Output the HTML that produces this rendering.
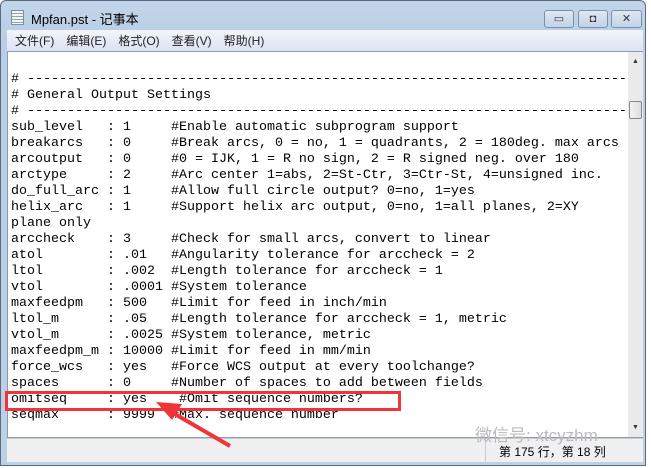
<!DOCTYPE html>
<html><head><meta charset="utf-8"><style>
*{margin:0;padding:0;box-sizing:border-box}
body{width:651px;height:468px;background:#fff;position:relative;overflow:hidden;font-family:"Liberation Sans","Noto Sans CJK SC",sans-serif}
.frame{position:absolute;left:0;top:0;width:646px;height:466px;background:linear-gradient(#c3d5ea,#b9cde4 40px,#bcd0e6);border:1px solid #5a6a80;border-radius:6px 6px 0 0}
.title{position:absolute;left:31px;top:9px;font-size:13px;color:#000}
.icon{position:absolute;left:11px;top:10px;width:13px;height:15px;background:#f4f4f4;border:1px solid #7d8ea6;background-image:repeating-linear-gradient(#f4f4f4 0 2px,#8aa 2px 3px)}
.btn{position:absolute;top:10px;height:18px;border:1px solid #7890ae;border-radius:3px;background:linear-gradient(#dfe8f3,#c3d3e6);font-size:11px;text-align:center;line-height:16px;color:#334}
.menu{position:absolute;left:7px;top:30px;width:636px;height:21px;background:linear-gradient(#f2f5fb,#dbe3f1);font-size:12px;color:#222;padding-top:2px;padding-left:8px}
.menu span{margin-right:12px}
.edit{position:absolute;left:7px;top:51px;width:636px;height:387px;background:#fff;border:1px solid #8a9ab0}
pre{position:absolute;left:3px;top:20px;font-family:"Liberation Mono",monospace;font-size:13.33px;line-height:16px;color:#000}
.sb{position:absolute;left:620px;top:0;width:15px;height:385px;background:#eaeaea}
.thumb{position:absolute;left:1px;top:49px;width:13px;height:18px;border:1px solid #888;background:linear-gradient(90deg,#f4f4f4,#ddd);border-radius:2px}
.status{position:absolute;left:7px;top:438px;width:636px;height:24px;background:#f0f0f0;border-top:1px solid #ccc;font-size:12px}
.red{position:absolute;left:5px;top:391px;width:396px;height:20px;border:3px solid #f0343a}
</style></head><body>
<div class="frame"></div>
<div class="icon"></div>
<div class="title">Mpfan.pst - 记事本</div>
<div class="btn" style="left:544px;width:30px">▭</div>
<div class="btn" style="left:578px;width:30px">◘</div>
<div class="btn" style="left:611px;width:31px">✕</div>
<div class="menu"><span>文件(F)</span><span>编辑(E)</span><span>格式(O)</span><span>查看(V)</span><span>帮助(H)</span></div>
<div class="edit">
<pre># ---------------------------------------------------------------------------
# General Output Settings
# ---------------------------------------------------------------------------
sub_level   : 1     #Enable automatic subprogram support
breakarcs   : 0     #Break arcs, 0 = no, 1 = quadrants, 2 = 180deg. max arcs
arcoutput   : 0     #0 = IJK, 1 = R no sign, 2 = R signed neg. over 180
arctype     : 2     #Arc center 1=abs, 2=St-Ctr, 3=Ctr-St, 4=unsigned inc.
do_full_arc : 1     #Allow full circle output? 0=no, 1=yes
helix_arc   : 1     #Support helix arc output, 0=no, 1=all planes, 2=XY
plane only
arccheck    : 3     #Check for small arcs, convert to linear
atol        : .01   #Angularity tolerance for arccheck = 2
ltol        : .002  #Length tolerance for arccheck = 1
vtol        : .0001 #System tolerance
maxfeedpm   : 500   #Limit for feed in inch/min
ltol_m      : .05   #Length tolerance for arccheck = 1, metric
vtol_m      : .0025 #System tolerance, metric
maxfeedpm_m : 10000 #Limit for feed in mm/min
force_wcs   : yes   #Force WCS output at every toolchange?
spaces      : 0     #Number of spaces to add between fields
omitseq     : yes    #Omit sequence numbers?
seqmax      : 9999  #Max. sequence number</pre>
<div class="sb"><div style="position:absolute;left:4px;top:6px;font-size:7px;color:#333">▲</div><div class="thumb"></div><div style="position:absolute;left:4px;top:372px;font-size:7px;color:#333">▼</div></div>
</div>
<div class="status"><div style="position:absolute;left:478px;top:0;width:1px;height:24px;background:#ccc"></div><div style="position:absolute;left:492px;top:4px">第 175 行，第 18 列</div></div>
<div style="position:absolute;left:475px;top:421px;font-size:17px;color:#bbb">微信号: xtcyzhm</div>
<div class="red"></div>
<svg style="position:absolute;left:0;top:0" width="651" height="468"><line x1="230" y1="446" x2="168" y2="410" stroke="#f0343a" stroke-width="4"/><polygon points="156,402 182,404 172,420" fill="#f0343a"/></svg>
</body></html>
